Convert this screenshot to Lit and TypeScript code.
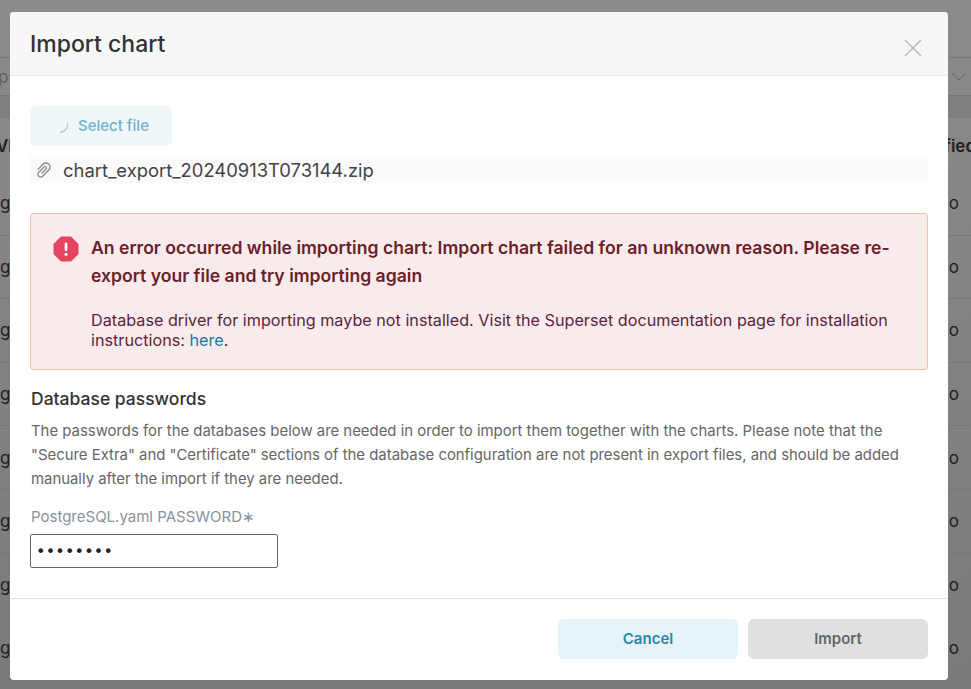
import { LitElement, html, css } from "lit";
import { customElement } from "lit/decorators.js";

@customElement("app-root")
export class AppRoot extends LitElement {
  static styles = css`
    :host { display: block; position: relative; width: 971px; height: 689px; overflow: hidden;
      font-family: Inter, "Liberation Sans", sans-serif; color: #333; background: #838383; }
    * { box-sizing: border-box; }
    .bg { height: 689px; display: flex; flex-direction: column; color: #1f1f1f; font-size: 17px;
      background: linear-gradient(180deg, #8b8b8b 0%, #7a7a7a 100%); }
    .bar { height: 39px; margin-top: 57px; border-top: 1px solid #777; border-bottom: 1px solid #777;
      display: flex; align-items: center; justify-content: space-between; padding-right: 4px; flex: none; color: #5f5f5f; }
    .bar span { margin-left: -2px; }
    .band { height: 22px; background: #7f7f7f; flex: none; }
    .head { height: 54px; flex: none; display: flex; justify-content: space-between; align-items: center;
      font-weight: 600; font-size: 17px; overflow: hidden; padding-top: 2px; }
    .head span:first-child { margin-left: -4px; }
    .head span:last-child { margin-right: -5px; }
    .row { height: 63.6px; flex: none; display: flex; justify-content: space-between; align-items: center;
      border-bottom: 1px solid #777; padding: 0 12px 0 0; overflow: hidden; }
    .modal { position: absolute; left: 10px; top: 12px; width: 938px; height: 668px; background: #fff;
      border-radius: 4px; display: flex; flex-direction: column; overflow: hidden; }
    header { height: 64px; flex: none; background: #f7f7f7; border-bottom: 1px solid #e8e8e8;
      padding: 0 20px; display: flex; align-items: center; justify-content: space-between; }
    h1 { margin: 0; font-size: 23px; font-weight: 500; color: #323232; line-height: 1; position: relative; top: 1px; }
    .close { display: block; margin: 8px 6px 0 0; }
    .body { flex: 1; padding: 30px 20px 0; display: flex; flex-direction: column; min-height: 0; }
    .select { width: 142px; height: 40px; border-radius: 6px; background: #f0f7fa; color: #6fb2cc;
      font-size: 15px; font-weight: 500; display: flex; align-items: center; padding: 0 0 1px 28px; gap: 8px; }
    .select svg { margin-top: 2px; }
    .file { margin-top: 10px; height: 27px; background: #fafafa; display: flex; align-items: center;
      padding-left: 5px; gap: 10px; font-size: 18.4px; color: #444; }
    .alert { margin-top: 30px; height: 157px; background: #f9ebeb; border: 1px solid #f6bfa5; border-radius: 3px;
      padding: 20px 20px 0 22px; display: flex; gap: 12px; }
    .alert svg { flex: none; margin-top: 2px; }
    .title { font-size: 17.600px; font-weight: 600; line-height: 28px; color: #6a1f29; }
    .detail { margin-top: 20px; font-size: 16.200px; line-height: 20px; color: #5b2440; }
    .detail a { color: #20799c; text-decoration: none; }
    h2 { margin: 18px 0 0 1px; font-size: 17.500px; font-weight: 500; line-height: 22px; color: #323232; }
    .desc { margin: 9px 0 0 1px; font-size: 14.900px; line-height: 24px; color: #666; }
    label { display: block; margin: 16px 0 0 1px; font-size: 15px; line-height: 20px; color: #879399; }
    .input { margin-top: 7px; width: 248px; height: 34px; border: 1px solid #666; border-radius: 2px;
      display: flex; align-items: center; padding-left: 5px; font-size: 16px; letter-spacing: 0.2px;
      color: #222; font-family: "DejaVu Sans", sans-serif; }
    footer { height: 82px; flex: none; border-top: 1px solid #e3e3e3; display: flex; justify-content: flex-end;
      gap: 10px; padding: 20px 20px 0; }
    .btn { width: 180px; height: 40px; border-radius: 6px; display: flex; align-items: center; justify-content: center;
      font-size: 15px; font-weight: 600; padding-bottom: 1px; }
    .cancel { background: #e6f3f9; color: #2b87a9; }
    .import { background: #e0e0e0; color: #666; }
  `;

  render() {
    const rows = [0, 1, 2, 3, 4, 5, 6, 7];
    return html`
      <div class="bg">
        <div class="bar">
          <span>p</span>
          <svg width="16" height="10" viewBox="0 0 16 10"><path d="M1 1l7 7 7-7" fill="none" stroke="#666" stroke-width="1"/></svg>
        </div>
        <div class="band"></div>
        <div class="head"><span>VI</span><span>fied</span></div>
        ${rows.map(() => html`<div class="row"><span>g</span><span>o</span></div>`)}
      </div>
      <div class="modal">
        <header>
          <h1>Import chart</h1>
          <svg class="close" width="18" height="18" viewBox="0 0 18 18"><path d="M1 1l16 16M17 1L1 17" stroke="#b5b9c2" stroke-width="1.5" fill="none"/></svg>
        </header>
        <div class="body">
          <div class="select">
            <svg width="12" height="12" viewBox="0 0 12 12"><path d="M9.500 3C10 7 6.500 11 2.500 11.300" fill="none" stroke="#a9d3e4" stroke-width="1.500" stroke-linecap="round"/></svg>
            <span>Select file</span>
          </div>
          <div class="file">
            <svg width="18" height="18" viewBox="64 64 896 896"><path fill="#8f8f8f" d="M779.3 196.6c-94.2-94.2-247.6-94.2-341.7 0l-261 260.8c-1.7 1.7-2.6 4-2.6 6.4s.9 4.7 2.6 6.4l36.9 36.9a9 9 0 0012.7 0l261-260.8c32.4-32.4 75.5-50.2 121.3-50.2s88.9 17.8 121.2 50.2c32.4 32.4 50.2 75.5 50.2 121.2 0 45.8-17.8 88.8-50.2 121.2l-266 265.9-43.1 43.1c-40.3 40.3-105.8 40.3-146.1 0-19.5-19.5-30.2-45.4-30.2-73s10.7-53.5 30.2-73l263.9-263.8c6.7-6.6 15.5-10.3 24.9-10.3h.1c9.4 0 18.1 3.7 24.7 10.3 6.7 6.7 10.3 15.5 10.3 24.9 0 9.3-3.7 18.1-10.3 24.7L372.4 653c-1.7 1.7-2.6 4-2.6 6.4s.9 4.7 2.6 6.4l36.9 36.9a9 9 0 0012.7 0l215.6-215.6c19.9-19.9 30.8-46.3 30.8-74.4s-11-54.6-30.8-74.4c-41.1-41.1-107.9-41-149 0L463 364 224.8 602.1A172.22 172.22 0 00174 724.8c0 46.3 18.1 89.8 50.8 122.5 33.9 33.8 78.3 50.7 122.7 50.7 44.4 0 88.8-16.9 122.6-50.7l309.2-309C824.8 492.7 850 432 850 367.5c.1-64.6-25.1-125.3-70.7-170.9z"/></svg>
            <span>chart_export_20240913T073144.zip</span>
          </div>
          <div class="alert">
            <svg width="26" height="26" viewBox="0 0 26 26">
              <path d="M8 .5h10L25.500 8v10L18 25.500H8L.5 18V8z" fill="#e5445e"/>
              <rect x="11.700" y="6.500" width="2.600" height="8.500" rx="1" fill="#fff"/>
              <circle cx="13" cy="18.300" r="1.600" fill="#fff"/>
            </svg>
            <div>
              <div class="title">An error occurred while importing chart: Import chart failed for an unknown reason. Please re-export your file and try importing again</div>
              <div class="detail">Database driver for importing maybe not installed. Visit the Superset documentation page for installation instructions: <a>here</a>.</div>
            </div>
          </div>
          <h2>Database passwords</h2>
          <div class="desc">The passwords for the databases below are needed in order to import them together with the charts. Please note that the "Secure Extra" and "Certificate" sections of the database configuration are not present in export files, and should be added manually after the import if they are needed.</div>
          <label>PostgreSQL.yaml PASSWORD∗</label>
          <div class="input">••••••••</div>
        </div>
        <footer>
          <div class="btn cancel">Cancel</div>
          <div class="btn import">Import</div>
        </footer>
      </div>
    `;
  }
}
